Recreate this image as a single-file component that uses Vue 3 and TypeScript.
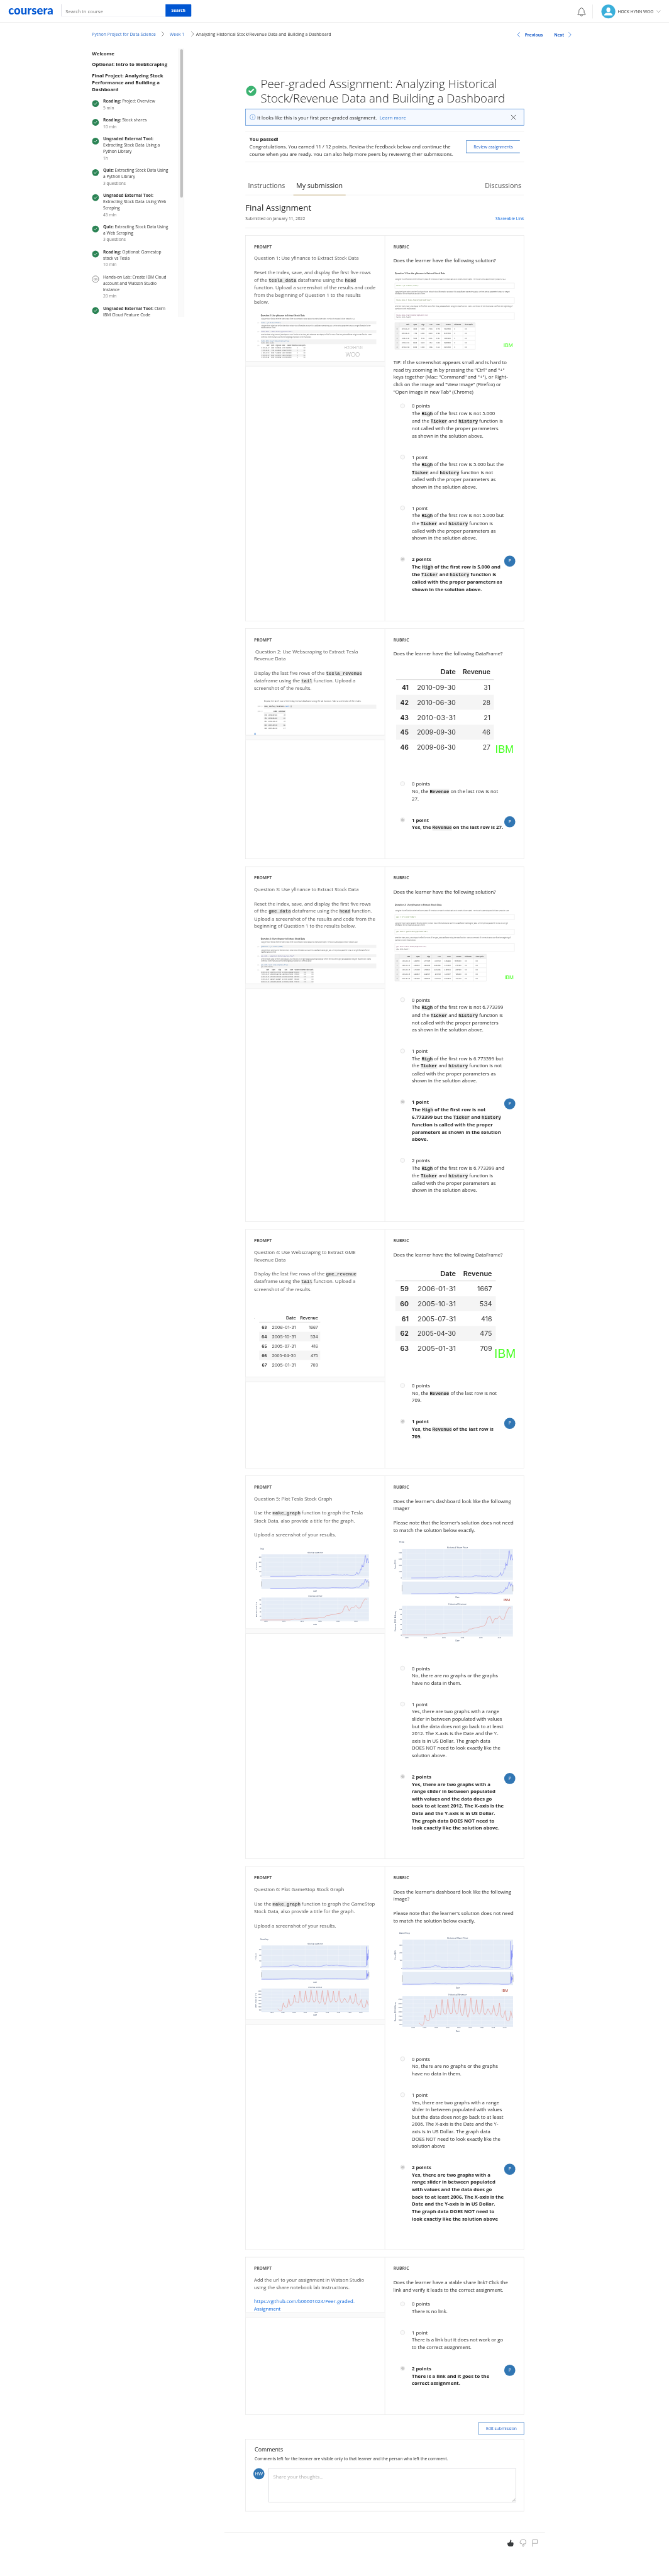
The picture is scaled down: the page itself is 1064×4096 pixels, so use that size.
<script setup lang="ts">
interface Lesson { kind: string; title: string[]; meta: string; lab?: boolean }
interface Option { lines: string[]; picked?: boolean }
interface TextMark {
  x: number; y: number; w: number; s: number; t: string
  bold?: boolean; mono?: boolean; fill?: string; anchor?: string; turn?: boolean; face?: string
}
interface BoxMark { x: number; y: number; w: number; h: number; fill: string; stroke?: string }
interface LineMark { pts: number[][]; color: string; width: number }
interface Figure {
  height: number; ox: number; oy: number; uy: number
  boxes: BoxMark[]; lines: LineMark[]; texts: TextMark[]
}
interface Card {
  height: number; prompt: string[][]; promptFig?: Figure
  link?: string[]; rubric: string[][]; rubricFig?: Figure; tip?: string[]; options: Option[]
}
type Rect = [number, number, number, number]

const UX = 1568 / 830

const lessons: Lesson[] = [
  { kind: 'Reading:', title: ['Project Overview'], meta: '5 min' },
  { kind: 'Reading:', title: ['Stock shares'], meta: '10 min' },
  { kind: 'Ungraded External Tool:', title: ['', 'Extracting Stock Data Using a', 'Python Library'], meta: '1h' },
  { kind: 'Quiz:', title: ['Extracting Stock Data Using', 'a Python Library'], meta: '3 questions' },
  { kind: 'Ungraded External Tool:', title: ['', 'Extracting Stock Data Using Web', 'Scraping'], meta: '45 min' },
  { kind: 'Quiz:', title: ['Extracting Stock Data Using', 'a Web Scraping'], meta: '3 questions' },
  { kind: 'Reading:', title: ['Optional: Gamestop', 'stock vs Tesla'], meta: '10 min' },
  { kind: '', title: ['Hands-on Lab: Create IBM Cloud', 'account and Watson Studio', 'instance'], meta: '20 min', lab: true },
  { kind: 'Ungraded External Tool:', title: ['Claim', 'IBM Cloud Feature Code'], meta: '' },
]

/* Splits a line on backticks; odd pieces are inline code. */
const parts = (line: string) => line.split('`').map((t, i) => ({ t, code: i % 2 === 1 })).filter(p => p.t)

const GREEN = '#45ff1f'
const tx = (x: number, y: number, w: number, s: number, t: string, o: Partial<TextMark> = {}): TextMark => ({ x, y, w, s, t, ...o })
const end = { anchor: 'end' }

/* ---------- notebook excerpts ---------- */
function smallRows(head: string[], rights: number[], rows: string[][], ys: number[], headY: number): TextMark[] {
  const out: TextMark[] = []
  head.forEach((h, i) => h && out.push(tx(rights[i], headY, 0, 3.6, h, { bold: true, anchor: 'end', fill: '#555' })))
  rows.forEach((r, j) => r.forEach((c, i) => out.push(tx(rights[i], ys[j], 0, 3.5, c, { anchor: 'end', bold: i === 0, fill: '#666' }))))
  return out
}
const heads = ['', 'Date', 'Open', 'High', 'Low', 'Close', 'Volume', 'Dividends', 'Stock Splits']
const teslaRows = [
  ['0', '2010-06-29', '3.800', '5.000', '3.508', '4.778', '93831500', '0', '0.0'],
  ['1', '2010-06-30', '5.158', '6.084', '4.660', '4.766', '85935500', '0', '0.0'],
  ['2', '2010-07-01', '5.000', '5.184', '4.054', '4.392', '41094000', '0', '0.0'],
  ['3', '2010-07-02', '4.600', '4.620', '3.742', '3.840', '25699000', '0', '0.0'],
  ['4', '2010-07-06', '4.000', '4.000', '3.166', '3.222', '34334500', '0', '0.0'],
]
const gmeRows = [
  ['0', '2002-02-13', '6.480513', '6.773399', '6.413183', '6.766666', '19054000', '0.0', '0.0'],
  ['1', '2002-02-14', '6.850831', '6.864296', '6.682506', '6.733003', '2755400', '0.0', '0.0'],
  ['2', '2002-02-15', '6.733001', '6.749833', '6.632006', '6.699336', '2097400', '0.0', '0.0'],
  ['3', '2002-02-19', '6.665671', '6.665671', '6.312189', '6.430017', '1852600', '0.0', '0.0'],
  ['4', '2002-02-20', '6.463681', '6.648838', '6.413183', '6.648838', '1723200', '0.0', '0.0'],
]

function notebook(q: number, stock: string, sym: string, name: string, obj: string, y: number[], w: number[], fig: Pick<Figure, 'height' | 'oy' | 'uy'>, bars: number[][], tableY: number[], headY: number, rights: number[], rows: string[][], odd: number): Figure {
  const step = tableY[1] - tableY[0]
  const m = { mono: true, fill: '#444' }
  return {
    ...fig, ox: 74, lines: [],
    boxes: [
      ...bars.map(b => ({ x: 111, y: b[0], w: 626, h: b[1], fill: '#f3f3f3' })),
      ...tableY.filter((_, i) => i % 2 === odd).map(t => ({ x: 111, y: t - step * 0.68, w: rights[8] - 111, h: step, fill: '#f3f3f3' })),
    ],
    texts: [
      tx(111, y[0], w[0], 5.8, `Question ${q}: Use yfinance to Extract Stock Data`, { bold: true, fill: '#222' }),
      tx(112, y[1], w[1], 4, `Using the Ticker function enter the ticker symbol of the stock we want to extract data on to create a ticker object. The stock is ${stock} and its ticker symbol is ${sym}.`),
      tx(91, y[2], 15, 3.8, '[4]:', { mono: true, fill: '#aaa' }),
      tx(112, y[2], w[2], 4.2, `${obj} = yf.Ticker("${sym}")`, { mono: true, fill: '#3a6ea8' }),
      tx(112, y[3], w[3], 4, `Using the ticker object and the function history extract stock information and save it in a dataframe named ${name}. Set the period parameter to max so we get information for the`),
      tx(112, y[4], w[4], 4, 'maximum amount of time.'),
      tx(91, y[5], 15, 3.8, '[5]:', { mono: true, fill: '#aaa' }),
      tx(112, y[5], w[5], 4.2, `${name} = ${obj}.history(period="max")`, { mono: true, fill: '#5a5a9a' }),
      tx(112, y[6], w[6], 4, `Reset the index using the reset_index(inplace=True) function on the ${name} DataFrame and display the first five rows of the ${name} dataframe using the head function. Take a`),
      tx(112, y[7], w[7], 4, `screenshot of the results and code from the beginning of Question ${q} to the results below.`),
      tx(91, y[8], 15, 3.8, '[6]:', { mono: true, fill: '#aaa' }),
      tx(112, y[8], w[8], 4.2, `${name}.reset_index(inplace=True)`, { mono: true, fill: '#3a6ea8' }),
      tx(112, y[9], w[9], 4.2, `${name}.head()`, m),
      tx(91, headY, 15, 3.8, '[6]:', { mono: true, fill: '#aaa' }),
      ...smallRows(heads, rights, rows, tableY, headY),
    ],
  }
}

function solution(q: number, title: string, stock: string, sym: string, name: string, obj: string, y: number[], w: number[], fig: Pick<Figure, 'height' | 'oy' | 'uy'>, frames: number[][], cols: number[], table: number[], rows: string[][]): Figure {
  const [top, step] = table
  const right = cols[cols.length - 1]
  const code = { mono: true, fill: '#444' }
  const boxes: BoxMark[] = frames.map(b => ({ x: 836, y: b[0], w: 648, h: b[1], fill: '#fff', stroke: '#e6e6e6' }))
  boxes.push({ x: 836, y: top, w: right - 836, h: step, fill: '#f0f0f0' }, { x: 836, y: top, w: 24, h: step * 6, fill: '#f0f0f0' })
  const lines: LineMark[] = []
  for (let i = 0; i <= 6; i++) lines.push({ pts: [[836, top + i * step], [right, top + i * step]], color: '#e2e2e2', width: 0.8 })
  ;[836, ...cols].forEach(c => lines.push({ pts: [[c, top], [c, top + 6 * step]], color: '#e2e2e2', width: 0.8 }))
  const texts: TextMark[] = [
    tx(836, y[0], w[0], 6.2, title, { bold: true, fill: '#333' }),
    tx(836, y[1], w[1], 4, `Using the Ticker function enter the ticker symbol of the stock we want to extract data on to create a ticker object. The stock is ${stock} and its ticker symbol is ${sym}.`),
    tx(844, y[2], w[2], 4.6, `${obj} = yf.Ticker("${sym}")`, { mono: true, fill: '#4d7a2a' }),
    tx(836, y[3], w[3], 4, `Using the ticker object and the function history extract stock information and save it in a dataframe named ${name}. Set the period parameter to max so we get`),
    tx(836, y[4], w[4], 4, 'information for the maximum amount of time.'),
    tx(844, y[5], w[5], 4.6, `${name} = ${obj}.history(period="max")`, { mono: true, fill: '#5d7040' }),
    tx(836, y[6], w[6], 4, `Reset the index, save, and display the first five rows of the ${name} dataframe using the head function. Take a screenshot of the results and code from the beginning of`),
    tx(836, y[7], w[7], 4, `Question ${q} to the results below.`),
    tx(844, y[8], w[8], 4.6, `${name}.reset_index(inplace=True)`, { mono: true, fill: '#7a4a6a' }),
    tx(844, y[9], w[9], 4.2, `${name}.head()`, code),
  ]
  ;[heads, ...rows].forEach((r, j) => r.forEach((c, i) => {
    if (!c) return
    const o = { bold: j === 0 || i === 0, fill: '#444' }
    const by = top + step * (j + 0.62)
    if (i >= 7) texts.push(tx(cols[i - 1] + 10, by, 0, 4, c, o))
    else texts.push(tx(cols[i] - (i ? 9 : 10), by, 0, 4, c, { ...o, anchor: 'end' }))
  }))
  return { ...fig, ox: 828, boxes, lines, texts }
}

/* ---------- revenue tables ---------- */
function revenue(fig: Pick<Figure, 'height' | 'ox' | 'oy' | 'uy'>, span: number[], rights: number[], widths: number[], size: number, headY: number, ruleY: number, first: number, step: number, rows: string[][], extra: TextMark[] = [], extraBoxes: BoxMark[] = []): Figure {
  const texts: TextMark[] = [
    tx(rights[1], headY, widths[0], size, 'Date', { bold: true, fill: '#222', ...end }),
    tx(rights[2], headY, widths[1], size, 'Revenue', { bold: true, fill: '#222', ...end }),
  ]
  const charW = widths[2] / 10
  rows.forEach((r, j) => {
    const y = first + j * step
    texts.push(tx(rights[0], y, 0, size, r[0], { bold: true, fill: '#222', ...end }))
    texts.push(tx(rights[1], y, r[1].split('1').length > 4 ? widths[2] - charW * 0.4 : widths[2], size, r[1], { fill: '#333', ...end }))
    texts.push(tx(rights[2], y, 0, size, r[2], { fill: '#333', ...end }))
  })
  return {
    ...fig,
    boxes: [...[1, 3].map(j => ({ x: span[0], y: first + j * step - step * 0.675, w: span[1] - span[0], h: step, fill: '#f5f5f5' })), ...extraBoxes],
    lines: [{ pts: [[span[0], ruleY], [span[1], ruleY]], color: '#bdbdbd', width: 1 }],
    texts: [...texts, ...extra],
  }
}

/* ---------- stock charts ---------- */
const teslaPrice = [925,859,1065,858,1072,854,1090,851,1097,854,1108,849,1118,852,1132,846,1138,849,1150,850,1158,849,1178,847,1190,851,1208,852,1215,849,1230,851,1250,851,1260,848,1268,843,1280,842,1285,844,1300,844,1310,846,1320,845,1330,848,1338,843,1345,847,1352,843,1362,846,1370,850,1380,851,1388,850,1395,846,1402,840,1406,830,1409,817,1412,832,1415,841,1420,828,1424,822,1427,806,1429,785,1433,792,1436,760,1438,740,1439,765,1441,752,1443,760,1447,762,1449,720,1451,705,1453,680,1454,650,1457,647,1459,670,1461,690,1463,722,1465,700,1467,680,1469,678,1471,700,1473,722,1475,710]
const teslaRevenue = [875,1301,1035,1301,1045,1298,1060,1291,1075,1293,1090,1293,1102,1290,1115,1289,1125,1286,1150,1283,1188,1283,1200,1277,1215,1279,1227,1276,1240,1255,1252,1255,1265,1248,1278,1246,1290,1242,1302,1236,1316,1233,1328,1220,1341,1164,1353,1158,1366,1211,1378,1174,1391,1176,1404,1154,1416,1182,1428,1180,1441,1125,1455,1087,1466,1094]
const gmePrice = [877,861,890,862,900,861,920,862,940,861,970,861,985,858,1000,857,1015,855,1030,854,1040,848,1048,845,1054,838,1060,842,1068,846,1075,844,1082,850,1088,856,1100,855,1115,857,1130,854,1145,857,1165,855,1185,857,1200,857,1215,854,1225,848,1235,843,1240,840,1248,847,1258,848,1268,845,1278,848,1290,845,1302,843,1308,850,1330,850,1350,853,1370,857,1400,857,1415,862,1450,861,1458,857,1462,850,1464,820,1465,645,1466,830,1467,840,1468,720,1469,790,1471,745,1473,775,1475,735,1476,676]
const gmeRevenue = [968,1301,977,1317,985,1321,992,1312,999,1238,1007,1278,1014,1283,1022,1280,1030,1195,1037,1262,1044,1262,1053,1242,1062,1156,1069,1227,1077,1228,1084,1235,1092,1114,1100,1217,1108,1231,1116,1225,1123,1112,1131,1210,1139,1228,1147,1222,1154,1100,1162,1195,1170,1231,1178,1220,1186,1109,1193,1215,1201,1243,1209,1226,1217,1109,1224,1220,1232,1255,1240,1212,1248,1100,1255,1195,1263,1231,1271,1217,1279,1115,1286,1213,1294,1231,1302,1213,1310,1112,1317,1213,1325,1238,1333,1218,1341,1187,1349,1211,1357,1234,1365,1216,1372,1159,1380,1227,1388,1247,1396,1217,1403,1142,1411,1238,1419,1262,1426,1250,1434,1202,1442,1280,1450,1285,1457,1280,1465,1206,1473,1262]

interface Stock {
  name: string; price: number[]; revenue: number[]; priceBox: Rect; revenueBox: Rect
  years: [number, string][]; prices: [number, string][]; revenues: [number, string][]
}
const tesla: Stock = {
  name: 'Tesla', price: teslaPrice, revenue: teslaRevenue, priceBox: [875, 634, 601, 238], revenueBox: [875, 1075, 601, 238],
  years: [[900, '2010'], [1001, '2012'], [1101, '2014'], [1202, '2016'], [1302, '2018'], [1403, '2020']],
  prices: [[666, '800'], [715, '600'], [764, '400'], [812, '200'], [860, '0']],
  revenues: [[1102, '10k'], [1142, '8k'], [1182, '6k'], [1222, '4k'], [1262, '2k'], [1302, '0']],
}
const gamestop: Stock = {
  name: 'GameStop', price: gmePrice, revenue: gmeRevenue, priceBox: [877, 633, 600, 243], revenueBox: [877, 1087, 600, 246],
  years: [2004, 2006, 2008, 2010, 2012, 2014, 2016, 2018, 2020].map((y, i) => [935 + i * 62, String(y)]),
  prices: [[676, '300'], [740, '200'], [802, '100'], [866, '0']],
  revenues: [3500, 3000, 2500, 2000, 1500, 1000, 500].map((v, i) => [1113 + i * 33.8, String(v)]),
}
const move = (p: number[], a: Rect, b: Rect) => [b[0] + ((p[0] - a[0]) * b[2]) / a[2], b[1] + ((p[1] - a[1]) * b[3]) / a[3]]
function path(flat: number[], a: Rect, b: Rect) {
  const out: number[][] = []
  for (let i = 0; i < flat.length; i += 2) out.push(move([flat[i], flat[i + 1]], a, b))
  return out
}
function chart(s: Stock, fig: Pick<Figure, 'height' | 'ox' | 'oy' | 'uy'>, p: Rect, sl: Rect, r: Rect, name: number[], t1: number[], t2: number[], dates: number[], yearY: number, size: number, labelX: number, extra: TextMark[] = []): Figure {
  const ink = '#42526e'
  const k = p[2] / s.priceBox[2]
  const lines: LineMark[] = []
  const texts: TextMark[] = [
    tx(name[0], name[1], name[2], size + 0.6, s.name, { fill: ink }),
    tx(t1[0], t1[1], t1[2], size, 'Historical Share Price', { fill: ink }),
    tx(t2[0], t2[1], t2[2], size, 'Historical Revenue', { fill: ink }),
    ...dates.map(y => tx(p[0] + p[2] / 2, y, 21 * k, size - 0.4, 'Date', { fill: ink, anchor: 'middle' })),
    tx(labelX, p[1] + p[3] * 0.5, 60 * (p[3] / s.priceBox[3]) + 12, size - 0.6, 'Price ($US)', { fill: ink, anchor: 'middle', turn: true }),
    tx(labelX, r[1] + r[3] * 0.5, 155 * (r[3] / s.revenueBox[3]), size - 0.6, 'Revenue ($US Millions)', { fill: ink, anchor: 'middle', turn: true }),
    ...extra,
  ]
  s.years.forEach(([x, t]) => {
    const gx = move([x, 0], s.priceBox, p)[0]
    ;[p, r].forEach(b => lines.push({ pts: [[gx, b[1]], [gx, b[1] + b[3]]], color: '#f4f7fb', width: 0.8 }))
    texts.push(tx(gx, yearY, 20 * k, size - 1, t, { fill: ink, anchor: 'middle' }))
  })
  const level = (list: [number, string][], a: Rect, b: Rect) => list.forEach(([y, t]) => {
    const gy = move([0, y], a, b)[1]
    lines.push({ pts: [[b[0], gy], [b[0] + b[2], gy]], color: '#f8fafd', width: t === '0' ? 1.4 : 0.8 })
    texts.push(tx(b[0] - 1, gy + 4, 0, size - 1, t, { fill: ink, anchor: 'end' }))
  })
  level(s.prices, s.priceBox, p)
  level(s.revenues, s.revenueBox, r)
  lines.push(
    { pts: path(s.price, s.priceBox, p), color: '#7078f5', width: 0.95 },
    { pts: path(s.price, s.priceBox, sl), color: '#6a73f7', width: 0.95 },
    { pts: path(s.revenue, s.revenueBox, r), color: '#e8877c', width: 0.95 },
  )
  ;[sl[0], sl[0] + sl[2]].forEach(x => lines.push({ pts: [[x, sl[1] + sl[3] * 0.25], [x, sl[1] + sl[3] * 0.76]], color: '#aaa', width: 1.4 }))
  return { ...fig, boxes: [p, sl, r].map(b => ({ x: b[0], y: b[1], w: b[2], h: b[3], fill: '#e5ecf6' })), lines, texts }
}

const px = (f: Figure, x: number) => (x - f.ox) / UX
const py = (f: Figure, y: number) => (y - f.oy) / f.uy
const poly = (f: Figure, l: LineMark) => l.pts.map(p => `${px(f, p[0]).toFixed(2)},${py(f, p[1]).toFixed(2)}`).join(' ')
const fit = (f: Figure, t: TextMark) => (t.w ? (t.w / (t.turn ? f.uy : UX)).toFixed(2) : undefined)
const turned = (f: Figure, t: TextMark) => (t.turn ? `rotate(-90 ${px(f, t.x)} ${py(f, t.y)})` : undefined)

const teslaRev = [['41', '2010-09-30', '31'], ['42', '2010-06-30', '28'], ['43', '2010-03-31', '21'], ['45', '2009-09-30', '46'], ['46', '2009-06-30', '27']]
const gmeRev = [['59', '2006-01-31', '1667'], ['60', '2005-10-31', '534'], ['61', '2005-07-31', '416'], ['62', '2005-04-30', '475'], ['63', '2005-01-31', '709']]
const mono = { mono: true }

const cards: Card[] = [
  {
    height: 1107,
    prompt: [['Question 1: Use yfinance to Extract Stock Data'], ['Reset the index, save, and display the first five rows', 'of the `tesla_data` dataframe using the `head`', 'function. Upload a screenshot of the results and code', 'from the beginning of Question 1 to the results', 'below.']],
    promptFig: (() => {
      const f = notebook(1, 'Tesla', 'TSLA', 'tesla_data', 'tesla', [1081, 1104, 1131, 1155, 1171, 1197, 1222, 1236, 1264, 1277], [238, 510, 108, 594, 80, 172, 602, 273, 155, 73], { height: 159, oy: 1005.3, uy: 2.529 }, [[1118, 21], [1184, 21], [1249, 36]], [1317, 1335, 1352, 1369, 1386], 1299, [118, 157, 184, 207, 221, 243, 277, 311, 352], teslaRows, 1)
      f.texts.push(tx(563, 1322, 100, 14, 'HOCKHYNN', { face: 'hand', fill: '#999' }), tx(570, 1374, 78, 17, 'WOO', { face: 'hand', fill: '#999' }))
      return f
    })(),
    rubric: [['Does the learner have the following solution?']],
    rubricFig: (() => {
      const f = solution(1, 'Question 1: Use the yfinance to Extract Stock Data', 'Tesla', 'TSLA', 'tesla_data', 'tesla', [775, 817, 864, 908, 924, 971, 1014, 1031, 1078, 1092], [273, 603, 120, 622, 165, 192, 637, 114, 173, 82], { height: 271.3, oy: 704.3, uy: 2.529 }, [[841, 40], [948, 40], [1056, 52]], [860, 924, 965, 1006, 1048, 1089, 1148, 1205, 1272], [1128, 32.3], teslaRows)
      f.texts.push(tx(1425, 1307, 51, 15, 'IBM', { face: 'sans', fill: GREEN }))
      return f
    })(),
    tip: ['TIP: If the screenshot appears small and is hard to', 'read try zooming in by pressing the "Ctrl" and "+"', 'keys together (Mac: "Command" and "+"), or Right-', 'click on the image and "View Image" (Firefox) or', '"Open Image in new Tab" (Chrome)'],
    options: [
      { lines: ['0 points', 'The `High` of the first row is not 5.000', 'and the `Ticker` and `history` function is', 'not called with the proper parameters', 'as shown in the solution above.'] },
      { lines: ['1 point', 'The `High` of the first row is 5.000 but the', '`Ticker` and `history` function is not', 'called with the proper parameters as', 'shown in the solution above.'] },
      { lines: ['1 point', 'The `High` of the first row is not 5.000 but', 'the `Ticker` and `history` function is', 'called with the proper parameters as', 'shown in the solution above.'] },
      { lines: ['2 points', 'The `High` of the first row is 5.000 and', 'the `Ticker` and `history` function is', 'called with the proper parameters as', 'shown in the solution above.'], picked: true },
    ],
  },
  {
    height: 662,
    prompt: [['\u00a0Question 2: Use Webscraping to Extract Tesla', 'Revenue Data'], ['Display the last five rows of the `tesla_revenue`', 'dataframe using the `tail` function. Upload a', 'screenshot of the results.']],
    promptFig: revenue({ height: 124.4, ox: 74, oy: 460.3, uy: 2.24 }, [127, 246], [142, 200, 244], [20, 36, 49], 4.6, 588, 597, 612, 22, [['44', '2010-09-30', '31'], ['45', '2010-06-30', '28'], ['46', '2010-03-31', '21'], ['48', '2009-09-30', '46'], ['49', '2009-06-30', '27']], [
      tx(129, 524, 527, 5, 'Display the last 5 row of the tesla_revenue dataframe using the tail function. Take a screenshot of the results.'),
      tx(92, 559, 30, 5, '[85]:', { ...mono, fill: '#aaa' }), tx(92, 588, 30, 5, '[85]:', { ...mono, fill: '#aaa' }),
      tx(129, 559, 112, 5.4, 'new_tesla_revenue.', { ...mono, fill: '#222' }), tx(242, 559, 25, 5.4, 'tail', { ...mono, fill: '#2a73cc' }), tx(267, 559, 13, 5.4, '()', { ...mono, fill: '#222' }),
    ], [{ x: 127, y: 543, w: 610, h: 26, fill: '#f3f3f3' }, { x: 77, y: 725, w: 5, h: 13, fill: '#2a73cc' }]),
    rubric: [['Does the learner have the following DataFrame?']],
    rubricFig: revenue({ height: 352, ox: 828, oy: 238.6, uy: 2.24 }, [843, 1373], [911, 1166, 1354], [82, 150, 210], 18.8, 348, 382, 448, 96.2, teslaRev, [tx(1380, 854, 100, 30, 'IBM', { face: 'sans', fill: GREEN })]),
    options: [
      { lines: ['0 points', 'No, the `Revenue` on the last row is not', '27.'] },
      { lines: ['1 point', 'Yes, the `Revenue` on the last row is 27.'], picked: true },
    ],
  },
  {
    height: 1020,
    prompt: [['Question 3: Use yfinance to Extract Stock Data'], ['Reset the index, save, and display the first five rows', 'of the `gme_data` dataframe using the `head` function.', 'Upload a screenshot of the results and code from the', 'beginning of Question 1 to the results below.']],
    promptFig: notebook(3, 'GameStop', 'GME', 'gme_data', 'gamestock', [338.5, 353, 370, 386, 393.5, 410, 424.5, 432.5, 449, 456], [239, 525, 121, 588, 84, 182, 596, 275, 148, 66], { height: 155, oy: 295, uy: 1.4933 }, [[361, 13], [401, 13], [441, 20]], [480, 490.3, 500.5, 511, 521.5], 470, [116, 156, 189, 221, 254, 286, 319, 354, 396], gmeRows, 0),
    rubric: [['Does the learner have the following solution?']],
    rubricFig: (() => {
      const f = solution(3, 'Question 3: Use yfinance to Extract Stock Data', 'GameStop', 'GME', 'gme_data', 'gme', [191.5, 216, 243.5, 270, 279, 307, 333, 342.5, 370, 380.5], [254, 620, 106, 613, 165, 174, 628, 114, 163, 70], { height: 289, oy: 148.6, uy: 1.4933 }, [[231, 22], [294, 22], [356, 33]], [860, 927, 980, 1036, 1093, 1148, 1205, 1264, 1332], [401, 19.2], gmeRows)
      f.texts.push(tx(1430, 507, 50, 15.5, 'IBM', { face: 'sans', fill: GREEN }))
      return f
    })(),
    options: [
      { lines: ['0 points', 'The `High` of the first row is not 6.773399', 'and the `Ticker` and `history` function is', 'not called with the proper parameters', 'as shown in the solution above.'] },
      { lines: ['1 point', 'The `High` of the first row is 6.773399 but', 'the `Ticker` and `history` function is not', 'called with the proper parameters as', 'shown in the solution above.'] },
      { lines: ['1 point', 'The `High` of the first row is not', '6.773399 but the `Ticker` and `history`', 'function is called with the proper', 'parameters as shown in the solution', 'above.'], picked: true },
      { lines: ['2 points', 'The `High` of the first row is 6.773399 and', 'the `Ticker` and `history` function is', 'called with the proper parameters as', 'shown in the solution above.'] },
    ],
  },
  {
    height: 686,
    prompt: [['Question 4: Use Webscraping to Extract GME', 'Revenue Data'], ['Display the last five rows of the `gme_revenue`', 'dataframe using the `tail` function. Upload a', 'screenshot of the results.']],
    promptFig: revenue({ height: 241.3, ox: 74, oy: 434.5, uy: 2.1778 }, [102, 433], [144, 301, 421], [53, 97, 130], 11.8, 600, 619, 660, 58.8, gmeRev.map((r, i) => [String(63 + i), r[1], r[2]]), [tx(74, 605, 0, 6, "'", { fill: '#888' })]),
    rubric: [['Does the learner have the following DataFrame?']],
    rubricFig: revenue({ height: 354.7, ox: 828, oy: 218.9, uy: 2.1778 }, [839, 1383], [911, 1167, 1363], [85, 156, 208], 19.2, 331, 361, 427, 93, gmeRev, [tx(1375, 842, 116, 35, 'IBM', { face: 'sans', fill: GREEN })]),
    options: [
      { lines: ['0 points', 'No, the `Revenue` of the last row is not', '709.'] },
      { lines: ['1 point', 'Yes, the `Revenue` of the last row is', '709.'], picked: true },
    ],
  },
  {
    height: 1100,
    prompt: [['Question 5: Plot Tesla Stock Graph'], ['Use the `make_graph` function to graph the Tesla', 'Stock Data, also provide a title for the graph.'], ['Upload a screenshot of your results.']],
    promptFig: chart(tesla, { height: 259, ox: 74, oy: 552.8, uy: 2.7034 }, [114, 676, 583, 181], [114, 867, 583, 78], [114, 1012, 583, 183], [107, 639, 21], [363, 671, 86], [367, 1008, 77], [968, 1224], 1203, 4.6, 91),
    rubric: [["Does the learner's dashboard look like the following", 'image?'], ["Please note that the learner's solution does not need", 'to match the solution below exactly.']],
    rubricFig: chart(tesla, { height: 375.5, ox: 828, oy: 514, uy: 2.7034 }, [875, 634, 601, 238], [875, 887, 601, 100], [875, 1075, 601, 238], [858, 586, 28], [1118, 628, 114], [1127, 1069, 97], [1017, 1351], 1325, 5.6, 843, [tx(1425, 1037, 35, 10.5, 'IBM', { face: 'sans', fill: '#a8392c' })]),
    options: [
      { lines: ['0 points', 'No, there are no graphs or the graphs', 'have no data in them.'] },
      { lines: ['1 point', 'Yes, there are two graphs with a range', 'slider in between populated with values', 'but the data does not go back to at least', '2012. The X-axis is the Date and the Y-', 'axis is in US Dollar. The graph data', 'DOES NOT need to look exactly like the', 'solution above.'] },
      { lines: ['2 points', 'Yes, there are two graphs with a', 'range slider in between populated', 'with values and the data does go', 'back to at least 2012. The X-axis is the', 'Date and the Y-axis is in US Dollar.', 'The graph data DOES NOT need to', 'look exactly like the solution above.'], picked: true },
    ],
  },
  {
    height: 1100,
    prompt: [['Question 6: Plot GameStop Stock Graph'], ['Use the `make_graph` function to graph the GameStop', 'Stock Data, also provide a title for the graph.'], ['Upload a screenshot of your results.']],
    promptFig: chart(gamestop, { height: 260, ox: 74, oy: 547.4, uy: 2.8 }, [114, 679, 583, 183], [114, 875, 583, 80], [114, 1025, 583, 189], [107, 639, 45], [363, 673, 86], [367, 1021, 76], [978, 1244], 1223, 4.6, 89),
    rubric: [["Does the learner's dashboard look like the following", 'image?'], ["Please note that the learner's solution does not need", 'to match the solution below exactly.']],
    rubricFig: chart(gamestop, { height: 375.5, ox: 828, oy: 508.2, uy: 2.8 }, [877, 633, 600, 243], [877, 891, 600, 106], [877, 1087, 600, 246], [859, 584, 58], [1119, 627, 114], [1127, 1082, 98], [1027, 1373], 1346, 5.6, 842, [tx(1415, 1053, 34, 10.5, 'IBM', { face: 'sans', fill: '#a8392c' })]),
    options: [
      { lines: ['0 points', 'No, there are no graphs or the graphs', 'have no data in them.'] },
      { lines: ['1 point', 'Yes, there are two graphs with a range', 'slider in between populated with values', 'but the data does not go back to at least', '2006. The X-axis is the Date and the Y-', 'axis is in US Dollar. The graph data', 'DOES NOT need to look exactly like the', 'solution above'] },
      { lines: ['2 points', 'Yes, there are two graphs with a', 'range slider in between populated', 'with values and the data does go', 'back to at least 2006. The X-axis is the', 'Date and the Y-axis is in US Dollar.', 'The graph data DOES NOT need to', 'look exactly like the solution above'], picked: true },
    ],
  },
  {
    height: 453,
    prompt: [['Add the url to your assignment in Watson Studio', 'using the share notebook lab instructions.']],
    link: ['https://github.com/b06601024/Peer-graded-', 'Assignment'],
    rubric: [['Does the learner have a viable share link? Click the', 'link and verify it leads to the correct assignment.']],
    options: [
      { lines: ['0 points', 'There is no link.'] },
      { lines: ['1 point', 'There is a link but it does not work or go', 'to the correct assignment.'] },
      { lines: ['2 points', 'There is a link and it goes to the', 'correct assignment.'], picked: true },
    ],
  },
]
</script>

<template>
  <div class="frame">
    <div class="page">
      <header class="topbar">
        <svg class="logo" width="132" height="52" viewBox="0 0 132 52">
          <text x="0" y="41" textLength="129" lengthAdjust="spacingAndGlyphs">coursera</text>
        </svg>
        <div class="search">
          <div class="field">Search in course</div>
          <button class="go">Search</button>
        </div>
        <div class="user">
          <svg width="24" height="26" viewBox="0 0 24 26" fill="none" stroke="#333" stroke-width="1.4">
            <path d="M1.5 20.5V18l3-3.5V10C4.500 5.500 7 3.500 9 3c0-3 6-3 6 0 2 .5 4.500 2.500 4.500 7v4.500l3 3.500v2.500zM9.500 20.500v1a2.500 2.500 0 0 0 5 0v-1" />
          </svg>
          <div class="person">
            <svg width="40" height="40" viewBox="0 0 40 40">
              <circle cx="20" cy="20" r="20" fill="#3aafda" />
              <ellipse cx="20" cy="15" rx="5.600" ry="7" fill="#fff" />
              <path d="M8 31c0-5 5-6.500 8-7.500 2.500 1.500 5.500 1.500 8 0 3 1 8 2.500 8 7.500z" fill="#fff" />
            </svg>
            <span>HOCK HYNN WOO</span>
            <svg width="12" height="8" viewBox="0 0 12 8" fill="none" stroke="#555"><path d="M.7 1 6 6.500 11.300 1" /></svg>
          </div>
        </div>
      </header>

      <nav class="crumbs">
        <a>Python Project for Data Science</a>
        <svg class="c1" width="9" height="15" viewBox="0 0 9 15" fill="none" stroke="#333"><path d="M1 .7 8 7.500 1 14.300" /></svg>
        <a>Week 1</a>
        <svg class="c2" width="9" height="15" viewBox="0 0 9 15" fill="none" stroke="#333"><path d="M1 .7 8 7.500 1 14.300" /></svg>
        <span>Analyzing Historical Stock/Revenue Data and Building a Dashboard</span>
        <div class="pager">
          <svg width="9" height="15" viewBox="0 0 9 15" fill="none" stroke="#0056d2" stroke-width="1.200"><path d="M8 .7 1 7.500l7 6.800" /></svg>
          <b>Previous</b>
          <b class="nx">Next</b>
          <svg width="9" height="15" viewBox="0 0 9 15" fill="none" stroke="#0056d2" stroke-width="1.200"><path d="M1 .7 8 7.500 1 14.300" /></svg>
        </div>
      </nav>

      <div class="body">
        <aside class="side">
          <div class="list">
            <h4>Welcome</h4>
            <h4>Optional: Intro to WebScraping</h4>
            <h4>Final Project: Analyzing Stock<br>Performance and Building a<br>Dashboard</h4>
            <div v-for="(l, i) in lessons" :key="i" class="lesson">
              <svg v-if="!l.lab" width="20" height="20" viewBox="0 0 20 20">
                <circle cx="10" cy="10" r="9.800" fill="#2a8354" />
                <path d="M5.500 9.800 9 12.900l5.600-6.200" fill="none" stroke="#fff" stroke-width="1.500" />
              </svg>
              <svg v-else width="20" height="20" viewBox="0 0 20 20" fill="none" stroke="#333">
                <circle cx="10" cy="10" r="9.300" />
                <path d="M7.500 7.200 4.900 10l2.600 2.800M12.500 7.200 15.100 10l-2.600 2.800M11 6.800l-2 6.400" />
              </svg>
              <div>
                <div v-for="(t, j) in l.title" :key="j" class="ll"><b v-if="j === 0 && l.kind">{{ l.kind + '\u00a0' }}</b>{{ t }}</div>
                <div v-if="l.meta" class="meta">{{ l.meta }}</div>
              </div>
            </div>
          </div>
          <div class="track"><div class="thumb"></div></div>
        </aside>

        <main class="main">
          <div class="title">
            <svg width="30" height="30" viewBox="0 0 30 30">
              <circle cx="15" cy="15" r="14.700" fill="#3cb371" />
              <path d="M6.500 15.200 9.300 12.600 13 16.300l8-8 2.700 2.600L13 21.700z" fill="#fff" />
            </svg>
            <h1><span>Peer-graded Assignment: Analyzing Historical</span><br><span>Stock/Revenue Data and Building a Dashboard</span></h1>
          </div>

          <div class="notice">
            <svg width="16" height="16" viewBox="0 0 16 16" fill="none" stroke="#2a73cc"><circle cx="8" cy="8" r="7.400" /><path d="M8 6.500V12M8 3.800v1.400" /></svg>
            <span>It looks like this is your first peer-graded assignment.</span>
            <a>Learn more</a>
            <svg class="x" width="15" height="15" viewBox="0 0 15 15" stroke="#333" stroke-width="1.500"><path d="M1 1l13 13M14 1 1 14" /></svg>
          </div>

          <section class="passed">
            <div>
              <b>You passed!</b><br>Congratulations. You earned 11 / 12 points. Review the feedback below and continue the<br>course when you are ready. You can also help more peers by reviewing their submissions.
            </div>
            <button class="outline cut">Review assignments</button>
          </section>

          <div class="tabs">
            <span>Instructions</span>
            <span class="on">My submission</span>
            <span class="last">Discussions</span>
          </div>

          <div class="head">
            <h2>Final Assignment</h2>
            <div class="sub"><span>Submitted on January 11, 2022</span><a>Shareable Link</a></div>
          </div>

          <div class="cards">
            <article v-for="(c, ci) in cards" :key="ci" class="card" :style="{ height: c.height + 'px' }">
              <div class="col left">
                <h5>PROMPT</h5>
                <p v-for="(b, bi) in c.prompt" :key="bi">
                  <span v-for="(ln, li) in b" :key="li" class="line" :class="{ tall: ln.includes('`') }"><template v-for="(s, si) in parts(ln)" :key="si"><code v-if="s.code">{{ s.t }}</code><template v-else>{{ s.t }}</template></template></span>
                </p>
                <p v-if="c.link"><a v-for="ln in c.link" :key="ln" class="line">{{ ln }}</a></p>
                <svg v-if="c.promptFig" class="fig" width="354" :height="c.promptFig.height">
                  <rect v-for="(b, k) in c.promptFig.boxes" :key="'b' + k" :x="px(c.promptFig, b.x)" :y="py(c.promptFig, b.y)" :width="b.w / UX" :height="b.h / c.promptFig.uy" :fill="b.fill" :stroke="b.stroke" />
                  <polyline v-for="(l, k) in c.promptFig.lines" :key="'l' + k" :points="poly(c.promptFig, l)" fill="none" :stroke="l.color" :stroke-width="l.width" />
                  <text v-for="(t, k) in c.promptFig.texts" :key="'t' + k" :x="px(c.promptFig, t.x)" :y="py(c.promptFig, t.y)" :font-size="t.s" :fill="t.fill ?? '#666'" :text-anchor="t.anchor" :textLength="fit(c.promptFig, t)" lengthAdjust="spacingAndGlyphs" :transform="turned(c.promptFig, t)" :class="[t.face, { bold: t.bold, mono: t.mono }]">{{ t.t }}</text>
                </svg>
                <div class="band"></div>
              </div>
              <div class="col right">
                <h5>RUBRIC</h5>
                <p v-for="(b, bi) in c.rubric" :key="bi"><span v-for="ln in b" :key="ln" class="line">{{ ln }}</span></p>
                <svg v-if="c.rubricFig" class="fig" width="354" :height="c.rubricFig.height">
                  <rect v-for="(b, k) in c.rubricFig.boxes" :key="'b' + k" :x="px(c.rubricFig, b.x)" :y="py(c.rubricFig, b.y)" :width="b.w / UX" :height="b.h / c.rubricFig.uy" :fill="b.fill" :stroke="b.stroke" />
                  <polyline v-for="(l, k) in c.rubricFig.lines" :key="'l' + k" :points="poly(c.rubricFig, l)" fill="none" :stroke="l.color" :stroke-width="l.width" />
                  <text v-for="(t, k) in c.rubricFig.texts" :key="'t' + k" :x="px(c.rubricFig, t.x)" :y="py(c.rubricFig, t.y)" :font-size="t.s" :fill="t.fill ?? '#666'" :text-anchor="t.anchor" :textLength="fit(c.rubricFig, t)" lengthAdjust="spacingAndGlyphs" :transform="turned(c.rubricFig, t)" :class="[t.face, { bold: t.bold, mono: t.mono }]">{{ t.t }}</text>
                </svg>
                <p v-if="c.tip" class="tip"><span v-for="ln in c.tip" :key="ln" class="line">{{ ln }}</span></p>
                <div class="options" :class="{ spaced: !c.rubricFig || c.tip }">
                  <div v-for="(o, oi) in c.options" :key="oi" class="option" :class="{ picked: o.picked }">
                    <i class="radio"></i>
                    <div class="words">
                      <span v-for="(ln, li) in o.lines" :key="li" class="line" :class="{ tall: ln.includes('`') }"><template v-for="(s, si) in parts(ln)" :key="si"><code v-if="s.code">{{ s.t }}</code><template v-else>{{ s.t }}</template></template></span>
                    </div>
                    <div v-if="o.picked" class="badge">P</div>
                  </div>
                </div>
              </div>
            </article>
          </div>

          <div class="actions"><button class="outline">Edit submission</button></div>

          <section class="comments">
            <h3>Comments</h3>
            <p>Comments left for the learner are visible only to that learner and the person who left the comment.</p>
            <div class="write">
              <div class="badge">HW</div>
              <div class="area">
                Share your thoughts...
                <svg width="9" height="9" viewBox="0 0 9 9" stroke="#555"><path d="M.5 8.500l8-8M5 8.500l3.500-3.500" /></svg>
              </div>
            </div>
          </section>

          <footer class="foot">
            <svg width="18" height="20" viewBox="0 0 18 20"><path d="M.3 10.500c0-1 .8-1.700 1.700-1.700h3C7 6.500 8.200 4 8.600.8c1.800-1.200 3.400.6 3.100 2.500-.2 1.500-.7 3-1.200 4.400h5c1.500 0 2.300 1.300 1.900 2.700.5.9.5 1.800 0 2.600.3 1 .1 1.900-.5 2.600 0 2.400-1.500 4-3.900 4H7c-2 0-3.200-.9-4.200-2C1 16.500.3 13.500.3 10.500z" fill="#373a3c" /></svg>
            <svg width="18" height="20" viewBox="0 0 18 20" fill="none" stroke="#555"><path d="M.6 9.500C.6 6.500 1.300 3.500 3 2 4 1 5 .5 7 .5h6c2.300 0 3.500 1.500 3.500 3.800.7.800.9 1.700.5 2.600.5.9.5 1.800 0 2.600.2 1.500-.6 2.500-2 2.500h-4.700c.5 1.400 1 2.700 1.200 4.200.2 1.800-1.400 3.400-2.700 3.200C8.500 16 7 13.500 5 11.200H2.200c-1 0-1.600-.8-1.600-1.700z" /></svg>
            <svg width="15" height="20" viewBox="0 0 15 20" fill="none" stroke="#555"><path d="M.6 20V.6h13.700v10.200H.6" /></svg>
          </footer>
        </main>
      </div>
    </div>
  </div>
</template>

<style>
body { margin: 0; background: #fff; }
</style>

<style scoped>
.frame { width: 1064px; height: 4096px; overflow: hidden; background: #fff; }
.page {
  width: 1920px; height: 7392px; transform: scale(0.5541667); transform-origin: 0 0;
  font: 14px/21px "Open Sans", "Noto Sans", sans-serif; color: #1f1f1f;
}
.page * { box-sizing: border-box; }
h1, h2, h3, h4, h5, p { margin: 0; }
a { color: #0b66dc; }
button { font-family: inherit; padding: 0; }
svg { display: block; flex: none; overflow: visible; }

.topbar { display: flex; height: 65px; border-bottom: 1px solid #ddd; padding: 12px 0 0 24px; }
.logo { margin: -12px 19px 0 0; }
.logo text { font: 900 35px Lato, sans-serif; fill: #0056d2; }
.search { display: flex; width: 374px; height: 36px; }
.field { flex: 1; border: 1px solid #c7c7d4; border-right: 0; border-radius: 2px 0 0 2px; padding: 8px 0 0 12px; font-size: 14px; color: #757575; }
.go { width: 74px; border: 0; border-radius: 0 2px 2px 0; background: #0056d2; color: #fff; font-size: 12px; font-weight: 700; }
.user { display: flex; margin-left: auto; padding-right: 24px; }
.user > svg { margin: 10px 19px 0 0; }
.person { display: flex; align-items: center; height: 40px; margin-top: 1px; border-left: 1px solid #ddd; padding-left: 25px; font-size: 12px; color: #333; }
.person span { width: 103px; margin: 0 8px 0 7px; white-space: nowrap; padding-top: 1px; }

.crumbs { display: flex; margin: 24px 0 0 264px; width: 1376px; height: 49px; font: 12px/18px "Open Sans", sans-serif; letter-spacing: 0.25px; color: #333; white-space: nowrap; }
.crumbs a { color: #2a6ac8; }
.c1 { margin: 1px 15px 0 16px; }
.c2 { margin: 1px 6px 0 18px; }
.pager { display: flex; margin-left: auto; padding-top: 3px; color: #1559c7; letter-spacing: 0; }
.pager b { margin-left: 13px; }
.pager .nx { margin: 0 12px 0 32px; }

.body { display: flex; align-items: flex-start; }
.side { display: flex; width: 264px; height: 772px; margin: 0 176px 0 264px; overflow: hidden; }
.list { flex: 1; padding-top: 5px; white-space: nowrap; }
h4 { font-size: 14px; line-height: 20px; margin-bottom: 12px; }
h4:nth-of-type(3) { margin-bottom: 15px; }
.lesson { display: flex; gap: 12px; margin-bottom: 16px; font-size: 12px; line-height: 18px; color: #333; }
.lesson svg { margin-top: 5px; }
.ll { height: 18px; }
.meta { line-height: 20px; color: #757575; }
.track { width: 15px; border: solid #e8e8e8; border-width: 0 1px; background: #fafafa; padding: 3px 3px 0; }
.thumb { width: 8px; height: 426px; border-radius: 4px; background: #c1c1c1; }

.main { width: 800px; padding-top: 80px; }
.title { display: flex; gap: 12px; padding: 0 0 10px 2px; }
.title svg { margin-top: 28px; }
h1 { font-size: 33.6px; line-height: 42px; font-weight: 300; white-space: nowrap; }
.notice { display: flex; align-items: center; height: 48px; border: 1px solid #2a73cc; background: #f5f9ff; padding: 0 22px 0 12px; }
.notice span { margin: 0 8px 0 5px; }
.notice a { color: #2a73cc; }
.notice .x { margin-left: auto; }
.passed { display: flex; justify-content: space-between; height: 89px; margin-top: 16px; border: solid #e1e1e1; border-width: 1px 0; padding: 12px 12px 0; white-space: nowrap; }
.outline { width: 130px; height: 36px; border: 1px solid #0056b8; background: #fff; color: #1559c7; font-size: 12px; }
.cut { width: 154px; margin-top: 14px; border-right: 0; }
.tabs { display: flex; height: 95px; padding-top: 52px; border-bottom: 1px solid #eee; font-size: 19.2px; line-height: 30px; color: #525252; }
.tabs span { height: 43px; padding: 0 8px; }
.tabs .on { margin-left: 16px; padding: 0 8px; color: #1f1f1f; border-bottom: 1px solid #a48130; }
.tabs .last { margin-left: auto; }
.head { height: 95px; border-bottom: 1px solid #ddd; padding-top: 17px; }
h2 { font-size: 24px; line-height: 36px; font-weight: 400; }
.sub { display: flex; justify-content: space-between; margin-top: 6px; font-size: 12px; line-height: 18px; color: #525252; }

.cards { display: flex; flex-direction: column; gap: 21px; padding-top: 20px; }
.card { display: flex; border: 1px solid #e1e1e1; }
.col { padding-top: 23px; white-space: nowrap; }
.left { width: 400px; border-right: 1px solid #e1e1e1; color: #525252; }
.right { flex: 1; padding-left: 24px; }
h5 { font-size: 12px; line-height: 18px; color: #525252; margin-bottom: 13px; }
.left h5, .left p, .left .fig { margin-left: 24px; }
.right h5 { margin-bottom: 20px; }
.line { display: block; height: 21px; }
.tall { height: 21.8px; line-height: 21.8px; }
p + p { margin-top: 20px; }
code { font: 700 13.3px/16px "Liberation Mono", monospace; background: #eee; }
.fig text { font-family: Inter, "Liberation Sans", sans-serif; white-space: pre; }
.fig .bold { font-weight: 600; }
.fig .mono { font-family: "DejaVu Sans Mono", monospace; }
.fig .sans { font-family: "Liberation Sans", sans-serif; }
.fig .hand { font-family: "Open Sans", sans-serif; font-weight: 300; }
.band { height: 15px; border: solid #e5e5e5; border-width: 1px 0; background: #fafafa; }
.spaced { padding-top: 20px; }
.option { display: flex; margin-bottom: 40px; position: relative; }
.radio { width: 13px; height: 13px; margin: 4px 20px 0 20px; border: 1px solid #cfcfcf; border-radius: 50%; background: #fafafa; }
.picked { font-weight: 700; }
.picked .radio { background: radial-gradient(circle, #c8c8c8 3.8px, #fafafa 4.5px); }
.badge { width: 32px; height: 32px; border-radius: 50%; background: #3176b3; color: #fff; font: 14px/32px "Open Sans", sans-serif; text-align: center; flex: none; }
.option .badge { position: absolute; top: 0; left: 318px; font-size: 12px; }

.actions { display: flex; justify-content: flex-end; padding: 21px 0 12px; }
.comments { height: 208px; border: 1px solid #e1e1e1; padding: 17px 22px 0 26px; }
h3 { font-size: 16px; line-height: 24px; font-weight: 400; }
.comments p { font-size: 12px; line-height: 18px; margin: 7px 0 17px; }
.write { display: flex; gap: 12px; margin-left: -4px; }
.area { position: relative; flex: 1; height: 98px; border: 1px solid #c4c6cc; padding: 13px 12px; color: #b0b0b0; }
.area svg { position: absolute; right: 1px; bottom: 1px; }
.foot { display: flex; justify-content: flex-end; gap: 18px; width: 920px; margin: 60px 0 0 -60px; border-top: 1px solid #ddd; padding: 20px 21px 0 0; }
</style>
